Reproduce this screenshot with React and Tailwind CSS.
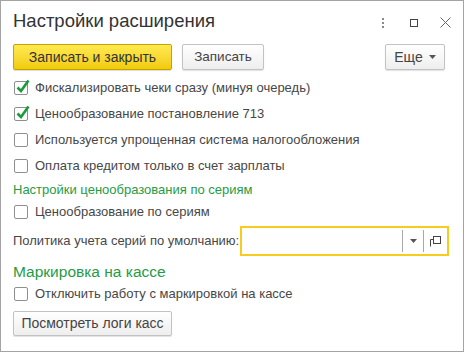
import { useState } from "react";

const rows = [
  { label: "Фискализировать чеки сразу (минуя очередь)", checked: true },
  { label: "Ценообразование постановление 713", checked: true },
  { label: "Используется упрощенная система налогообложения", checked: false },
  { label: "Оплата кредитом только в счет зарплаты", checked: false },
];

function CheckBox({ checked, onChange, label, className = "h-[26px]" }) {
  return (
    <label className={`flex items-center cursor-default ${className}`} onClick={onChange}>
      <span className="relative w-[14px] h-[14px] ml-[1px] shrink-0 rounded-[2px] border border-[#8f8f8f] bg-white">
        {checked && (
          <svg className="absolute left-[1px] top-[-3px]" width="14" height="15" viewBox="0 0 14 15">
            <path d="M1.5 8.5 L5 12 L12.5 1.5" fill="none" stroke="#179b3b" strokeWidth="2.6" />
          </svg>
        )}
      </span>
      <span className="ml-[7px] text-[13px] text-[#474747]">{label}</span>
    </label>
  );
}

export default function App() {
  const [checks, setChecks] = useState(rows.map((r) => r.checked));
  const [bySeries, setBySeries] = useState(false);
  const [noMarking, setNoMarking] = useState(false);

  const toggle = (i) => setChecks((prev) => prev.map((c, j) => (j === i ? !c : c)));

  return (
    <div className="w-[466px] h-[352px] bg-white" style={{ fontFamily: '"Liberation Sans", Arial, sans-serif' }}>
      <div className="w-[464px] h-[352px] border border-[#a3a3a3] px-[12px]">
        {/* header */}
        <div className="flex items-start h-[43px]">
          <h1 className="mt-[9px] text-[18.5px] leading-[22px] text-[#333]">Настройки расширения</h1>
          <div className="ml-auto flex items-center mt-[16px]">
            <div className="flex flex-col gap-[2px] mr-[26px]">
              <span className="w-[2px] h-[2px] bg-[#8a8a8a]" />
              <span className="w-[2px] h-[2px] bg-[#8a8a8a]" />
              <span className="w-[2px] h-[2px] bg-[#8a8a8a]" />
            </div>
            <span className="w-[8px] h-[8px] border border-[#444] mr-[22px]" />
            <svg width="11" height="11" viewBox="0 0 11 11">
              <path d="M0.5 0.5 L10.5 10.5 M10.5 0.5 L0.5 10.5" stroke="#666" strokeWidth="1" />
            </svg>
          </div>
        </div>

        {/* command bar */}
        <div className="flex items-center h-[26px]">
          <button className="w-[159px] h-[26px] rounded-[2px] border border-[#c4a400] bg-gradient-to-b from-[#ffea4f] to-[#f2cb00] text-[14px] text-[#333] shadow-[0_1px_1px_rgba(0,0,0,0.15)]">
            Записать и закрыть
          </button>
          <button className="ml-[10px] w-[82px] h-[26px] rounded-[2px] border border-[#c2c2c2] bg-gradient-to-b from-white to-[#eeeeee] text-[13.5px] text-[#444] shadow-[0_1px_1px_rgba(0,0,0,0.12)]">
            Записать
          </button>
          <button className="ml-auto mr-[6px] w-[60px] h-[26px] rounded-[2px] border border-[#c2c2c2] bg-gradient-to-b from-white to-[#eeeeee] text-[14px] text-[#444] shadow-[0_1px_1px_rgba(0,0,0,0.12)] flex items-center justify-center">
            Еще
            <svg className="ml-[6px]" width="7" height="4" viewBox="0 0 7 4">
              <path d="M0 0 H7 L3.5 4 Z" fill="#555" />
            </svg>
          </button>
        </div>

        <div className="mt-[5px]">
          {rows.map((r, i) => (
            <CheckBox key={r.label} label={r.label} checked={checks[i]} onChange={() => toggle(i)} />
          ))}
        </div>

        <div className="h-[22px] flex items-center text-[13px] text-[#1f9c46]">Настройки ценообразования по сериям</div>
        <CheckBox className="h-[22px]" label="Ценообразование по сериям" checked={bySeries} onChange={() => setBySeries(!bySeries)} />

        <div className="mt-[3px] flex items-center h-[30px]">
          <span className="w-[227px] shrink-0 text-[13px] text-[#474747]">Политика учета серий по умолчанию:</span>
          <div className="w-[209px] h-[30px] border-2 border-[#f8cc1c] flex items-center">
            <input className="flex-1 min-w-0 h-full outline-none px-[4px] text-[13px]" />
            <span className="w-px h-[22px] bg-[#a8a8a8]" />
            <span className="w-[20px] flex justify-center">
              <svg width="7" height="4" viewBox="0 0 7 4">
                <path d="M0 0 H7 L3.5 4 Z" fill="#555" />
              </svg>
            </span>
            <span className="w-px h-[22px] bg-[#a8a8a8]" />
            <span className="w-[23px] flex justify-center">
              <svg width="11" height="11" viewBox="0 0 11 11">
                <path d="M3.5 3.5 H0.5 V10.5" fill="none" stroke="#444" />
                <rect x="3.5" y="0.5" width="7" height="7" fill="none" stroke="#444" />
              </svg>
            </span>
          </div>
        </div>

        <div className="mt-[5px] h-[22px] flex items-center text-[15.5px] text-[#1f9c46]">Маркировка на кассе</div>
        <CheckBox className="h-[22px]" label="Отключить работу с маркировкой на кассе" checked={noMarking} onChange={() => setNoMarking(!noMarking)} />

        <button className="mt-[6px] w-[159px] h-[25px] rounded-[2px] border border-[#c2c2c2] bg-gradient-to-b from-white to-[#eeeeee] text-[14px] text-[#444] shadow-[0_1px_1px_rgba(0,0,0,0.12)]">
          Посмотреть логи касс
        </button>
      </div>
    </div>
  );
}
